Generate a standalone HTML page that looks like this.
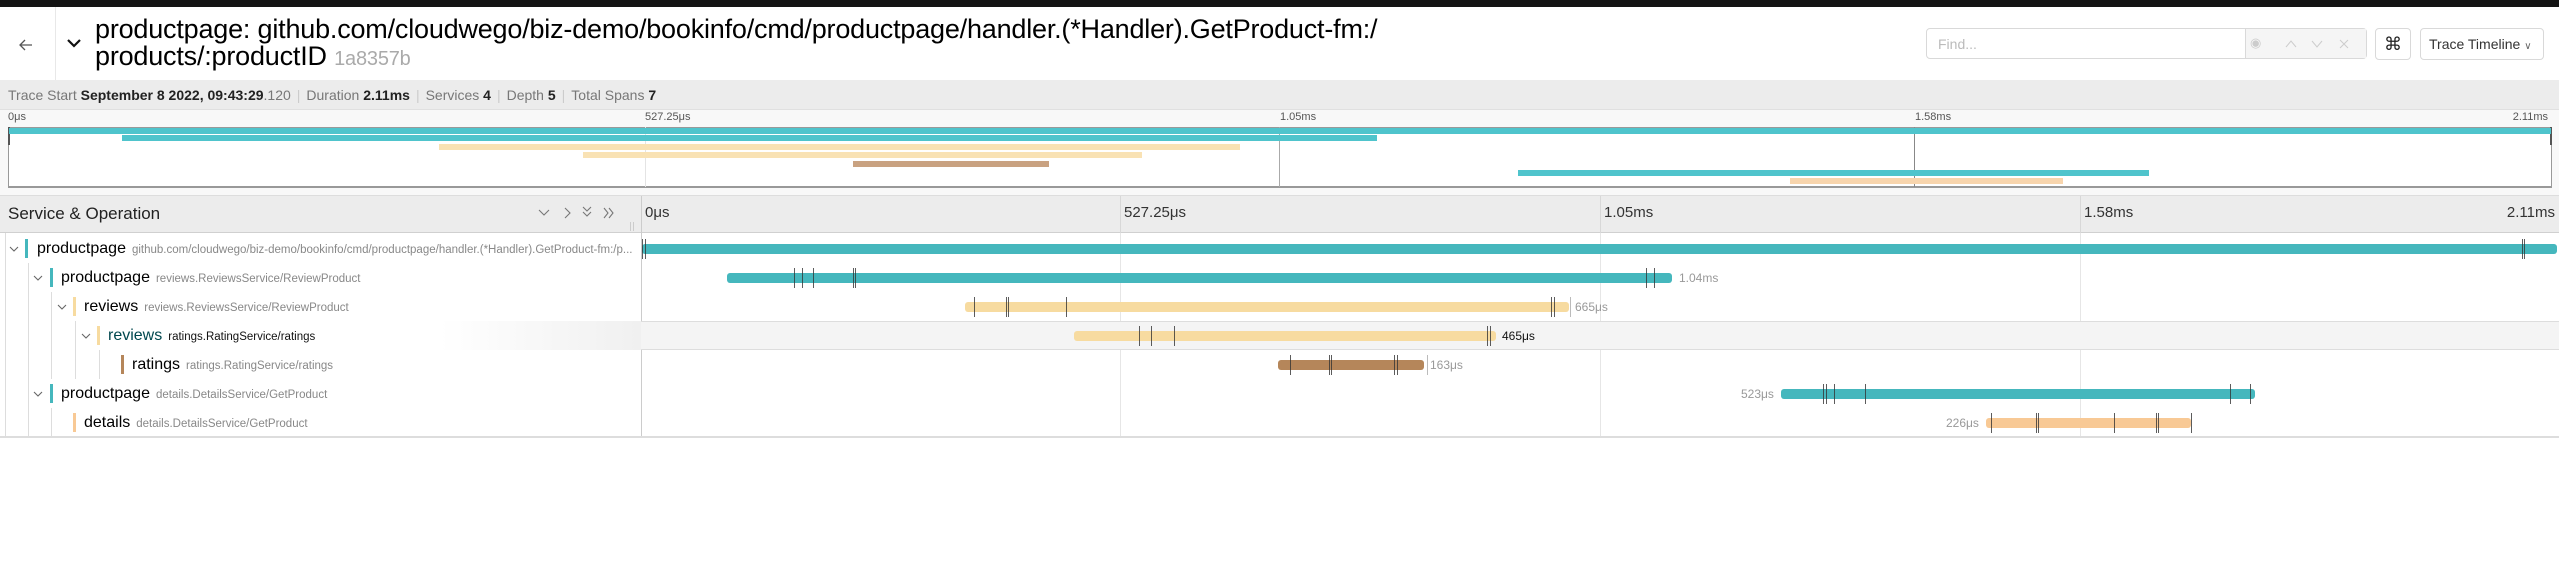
<!DOCTYPE html>
<html><head><meta charset="utf-8"><style>
*{box-sizing:border-box;margin:0;padding:0}
body{width:2559px;height:583px;background:#fff;font-family:"Liberation Sans",Arial,sans-serif;color:#000;position:relative;overflow:hidden}
.a{position:absolute}
.bar{position:absolute;height:10px;border-radius:3px}
.tk{position:absolute;width:1px;height:20px;background:#333;opacity:.8}
.lbl{position:absolute;font-size:12px;color:#999;white-space:nowrap}
.row{position:absolute;left:0;width:2559px;height:29px}
.svc{position:absolute;font-size:16px;white-space:nowrap;top:6px}
.svc small{font-size:11.5px;color:#888;margin-left:6px}
.cb{position:absolute;width:3px;height:19px;top:5px}
.tg{position:absolute;top:7px}
.gl{position:absolute;width:1px;background:#ddd}
.mb{position:absolute;height:6px}
</style></head><body>
<div class="a" style="left:0;top:0;width:2559px;height:7px;background:#141414"></div>
<!-- header -->
<div class="a" style="left:0;top:7px;width:56px;height:73px;border-right:1px solid #e8e8e8"></div>
<svg class="a" style="left:18px;top:37px" width="16" height="16" viewBox="0 0 16 16"><path d="M14 8H2M7 3L2 8l5 5" fill="none" stroke="#555" stroke-width="1.3"/></svg>
<svg class="a" style="left:67px;top:38px" width="14" height="10" viewBox="0 0 14 10"><path d="M1 2l6 6 6-6" fill="none" stroke="#111" stroke-width="2.2"/></svg>
<div class="a" style="left:95px;top:16px;font-size:27px;line-height:27px;font-weight:500;white-space:nowrap;letter-spacing:-0.2px">productpage: github.com/cloudwego/biz-demo/bookinfo/cmd/productpage/handler.(*Handler).GetProduct-fm:/<br>products/:productID <span style="color:#aaa;font-size:20px;font-weight:400">1a8357b</span></div>
<div class="a" style="left:1926px;top:28px;width:441px;height:31px;border:1px solid #d9d9d9;border-radius:4px"></div>
<div class="a" style="left:2245px;top:29px;width:121px;height:29px;background:#f5f5f5;border-left:1px solid #d9d9d9"></div>
<div class="a" style="left:1938px;top:36px;font-size:14px;color:#bbb">Find...</div>
<div class="a" style="left:2250px;top:35px;font-size:13px;color:#ccc;letter-spacing:0">◉</div>
<svg class="a" style="left:2284px;top:38px" width="80" height="12"><path d="M2 9l5-6 5 6M28 3l5 6 5-6M56 2l8 8M64 2l-8 8" fill="none" stroke="#ccc" stroke-width="1"/></svg>
<div class="a" style="left:2375px;top:28px;width:36px;height:32px;border:1px solid #d9d9d9;border-radius:4px;text-align:center;font-size:18px;line-height:30px;color:#222">⌘</div>
<div class="a" style="left:2420px;top:28px;width:124px;height:32px;border:1px solid #d9d9d9;border-radius:4px;font-size:14px;line-height:30px;padding-left:8px;color:#333">Trace Timeline <span style="font-size:10px;color:#666">∨</span></div>
<!-- info bar -->
<div class="a" style="left:0;top:80px;width:2559px;height:30px;background:#ececec;border-bottom:1px solid #e0e0e0"></div>
<div class="a" style="left:8px;top:87px;font-size:14px;color:#777;white-space:nowrap">Trace Start <b style="color:#222">September 8 2022, 09:43:29</b>.120<span style="color:#ccc;margin:0 6px">|</span>Duration <b style="color:#222">2.11ms</b><span style="color:#ccc;margin:0 6px">|</span>Services <b style="color:#222">4</b><span style="color:#ccc;margin:0 6px">|</span>Depth <b style="color:#222">5</b><span style="color:#ccc;margin:0 6px">|</span>Total Spans <b style="color:#222">7</b></div>
<!-- minimap -->
<div class="a" style="left:0;top:110px;width:2559px;height:86px;background:#f8f8f8"></div>
<div class="a" style="left:8px;top:111px;font-size:11px;color:#555">0μs</div>
<div class="a" style="left:645px;top:111px;font-size:11px;color:#555">527.25μs</div>
<div class="a" style="left:1280px;top:111px;font-size:11px;color:#555">1.05ms</div>
<div class="a" style="left:1915px;top:111px;font-size:11px;color:#555">1.58ms</div>
<div class="a" style="right:11px;top:111px;font-size:11px;color:#555">2.11ms</div>
<div class="a" style="left:8px;top:127px;width:2544px;height:61px;background:#fff;border:1px solid #999;border-width:1px 1px 2px 1px"></div>
<div class="a" style="left:8px;top:127px;width:2px;height:18px;background:#555"></div>
<div class="a" style="left:2550px;top:127px;width:2px;height:18px;background:#555"></div>
<div class="a" style="left:645px;top:127px;width:1px;height:60px;background:#e4e4e4"></div>
<div class="a" style="left:1279px;top:127px;width:1px;height:60px;background:#aaa"></div>
<div class="a" style="left:1914px;top:127px;width:1px;height:60px;background:#888"></div>
<div class="mb" style="left:9px;top:128px;width:2542px;background:#4fc4cc"></div>
<div class="mb" style="left:122px;top:135px;width:1255px;background:#4fc4cc"></div>
<div class="mb" style="left:439px;top:144px;width:801px;background:#f9e2b4"></div>
<div class="mb" style="left:583px;top:152px;width:559px;background:#f9e2b4"></div>
<div class="mb" style="left:853px;top:161px;width:196px;background:#c9a281"></div>
<div class="mb" style="left:1518px;top:170px;width:631px;background:#4fc4cc"></div>
<div class="mb" style="left:1790px;top:178px;width:273px;background:#f8d5ad"></div>
<!-- table header -->
<div class="a" style="left:0;top:195px;width:2559px;height:38px;background:#ececec;border-top:1px solid #ddd;border-bottom:1px solid #d0d0d0"></div>
<div class="a" style="left:8px;top:204px;font-size:17px;color:#222">Service &amp; Operation</div>
<svg class="a" style="left:538px;top:206px" width="90" height="14"><g fill="none" stroke="#777" stroke-width="1.1"><path d="M1 4l5 5 5-5"/><path d="M27 2l5 5-5 5"/><path d="M45 1l4 4 4-4M45 6l4 4 4-4"/><path d="M66 2l4 5-4 5M71 2l4 5-4 5"/></g></svg>
<div class="a" style="left:630px;top:222px;width:4px;height:9px;border-left:1px solid #ccc;border-right:1px solid #ccc"></div>
<div class="a" style="left:641px;top:196px;width:1px;height:241px;background:#ccc"></div>
<div class="a" style="left:645px;top:204px;font-size:15px;color:#333">0μs</div>
<div class="a" style="left:1124px;top:204px;font-size:15px;color:#333">527.25μs</div>
<div class="a" style="left:1604px;top:204px;font-size:15px;color:#333">1.05ms</div>
<div class="a" style="left:2084px;top:204px;font-size:15px;color:#333">1.58ms</div>
<div class="a" style="right:4px;top:204px;font-size:15px;color:#333">2.11ms</div>
<div class="a" style="left:1120px;top:196px;width:1px;height:37px;background:#d8d8d8"></div>
<div class="a" style="left:1600px;top:196px;width:1px;height:37px;background:#d8d8d8"></div>
<div class="a" style="left:2080px;top:196px;width:1px;height:37px;background:#d8d8d8"></div>
<!-- grid lines in body -->
<div class="a" style="left:1120px;top:233px;width:1px;height:204px;background:#e6e6e6"></div>
<div class="a" style="left:1600px;top:233px;width:1px;height:204px;background:#e6e6e6"></div>
<div class="a" style="left:2080px;top:233px;width:1px;height:204px;background:#e6e6e6"></div>
<!-- highlighted row 4 -->
<div class="a" style="left:641px;top:321px;width:1918px;height:29px;background:#f4f4f4;border-top:1px solid #ddd;border-bottom:1px solid #ddd"></div>
<div class="a" style="left:0;top:321px;width:641px;height:29px;background:linear-gradient(to right,#fff 0,#fff 440px,#f0f0f0 641px)"></div>
<!-- guide lines -->
<div class="gl" style="left:5px;top:233px;height:204px"></div>
<div class="gl" style="left:28px;top:263px;height:174px"></div>
<div class="gl" style="left:51px;top:292px;height:87px"></div>
<div class="gl" style="left:51px;top:408px;height:29px"></div>
<div class="gl" style="left:75px;top:321px;height:58px"></div>
<div class="gl" style="left:99px;top:350px;height:29px"></div>
<!-- rows left -->
<svg width="0" height="0" style="position:absolute"><defs><path id="chev" d="M1 2l4 4 4-4" fill="none" stroke="#666" stroke-width="1.1"/></defs></svg>
<div class="row" style="top:234px"><svg class="tg" style="left:9px;top:11px" width="10" height="8"><use href="#chev"/></svg><div class="cb" style="left:25px;background:#45b7bd"></div><div class="svc" style="left:37px">productpage<small>github.com/cloudwego/biz-demo/bookinfo/cmd/productpage/handler.(*Handler).GetProduct-fm:/p...</small></div></div>
<div class="row" style="top:263px"><svg class="tg" style="left:33px;top:11px" width="10" height="8"><use href="#chev"/></svg><div class="cb" style="left:50px;background:#45b7bd"></div><div class="svc" style="left:61px">productpage<small>reviews.ReviewsService/ReviewProduct</small></div></div>
<div class="row" style="top:292px"><svg class="tg" style="left:57px;top:11px" width="10" height="8"><use href="#chev"/></svg><div class="cb" style="left:73px;background:#f7dba0"></div><div class="svc" style="left:84px">reviews<small>reviews.ReviewsService/ReviewProduct</small></div></div>
<div class="row" style="top:321px"><svg class="tg" style="left:81px;top:11px" width="10" height="8"><use href="#chev"/></svg><div class="cb" style="left:97px;background:#f7dba0"></div><div class="svc" style="left:108px;color:#00474e">reviews<small style="color:#111">ratings.RatingService/ratings</small></div></div>
<div class="row" style="top:350px"><div class="cb" style="left:121px;background:#b5865a"></div><div class="svc" style="left:132px">ratings<small>ratings.RatingService/ratings</small></div></div>
<div class="row" style="top:379px"><svg class="tg" style="left:33px;top:11px" width="10" height="8"><use href="#chev"/></svg><div class="cb" style="left:50px;background:#45b7bd"></div><div class="svc" style="left:61px">productpage<small>details.DetailsService/GetProduct</small></div></div>
<div class="row" style="top:408px"><div class="cb" style="left:73px;background:#f8c995"></div><div class="svc" style="left:84px">details<small>details.DetailsService/GetProduct</small></div></div>
<!-- bars -->
<div class="bar" style="left:642px;top:244px;width:1915px;background:#45b7bd"></div>
<div class="tk" style="left:642px;top:239px"></div><div class="tk" style="left:645px;top:239px"></div><div class="tk" style="left:2522px;top:239px"></div><div class="tk" style="left:2524px;top:239px"></div>

<div class="bar" style="left:727px;top:273px;width:945px;background:#45b7bd"></div>
<div class="tk" style="left:794px;top:268px"></div><div class="tk" style="left:802px;top:268px"></div><div class="tk" style="left:813px;top:268px"></div><div class="tk" style="left:853px;top:268px"></div><div class="tk" style="left:855px;top:268px"></div><div class="tk" style="left:1646px;top:268px"></div><div class="tk" style="left:1654px;top:268px"></div>
<div class="lbl" style="left:1679px;top:271px">1.04ms</div>

<div class="bar" style="left:965px;top:302px;width:604px;background:#f7dba0"></div>
<div class="tk" style="left:974px;top:297px"></div><div class="tk" style="left:1006px;top:297px"></div><div class="tk" style="left:1008px;top:297px"></div><div class="tk" style="left:1066px;top:297px"></div><div class="tk" style="left:1551px;top:297px"></div><div class="tk" style="left:1554px;top:297px"></div><div class="tk" style="left:1570px;top:297px;background:#aaa"></div>
<div class="lbl" style="left:1575px;top:300px">665μs</div>

<div class="bar" style="left:1074px;top:331px;width:422px;background:#f7dba0"></div>
<div class="tk" style="left:1139px;top:326px"></div><div class="tk" style="left:1151px;top:326px"></div><div class="tk" style="left:1174px;top:326px"></div><div class="tk" style="left:1487px;top:326px"></div><div class="tk" style="left:1490px;top:326px"></div>
<div class="lbl" style="left:1502px;top:329px;color:#111">465μs</div>

<div class="bar" style="left:1278px;top:360px;width:146px;background:#b5865a"></div>
<div class="tk" style="left:1290px;top:355px"></div><div class="tk" style="left:1329px;top:355px"></div><div class="tk" style="left:1331px;top:355px"></div><div class="tk" style="left:1394px;top:355px"></div><div class="tk" style="left:1397px;top:355px"></div><div class="tk" style="left:1427px;top:355px;background:#aaa"></div>
<div class="lbl" style="left:1430px;top:358px">163μs</div>

<div class="bar" style="left:1781px;top:389px;width:474px;background:#45b7bd"></div>
<div class="tk" style="left:1823px;top:384px"></div><div class="tk" style="left:1826px;top:384px"></div><div class="tk" style="left:1834px;top:384px"></div><div class="tk" style="left:1865px;top:384px"></div><div class="tk" style="left:2230px;top:384px"></div><div class="tk" style="left:2250px;top:384px"></div>
<div class="lbl" style="left:1741px;top:387px">523μs</div>

<div class="bar" style="left:1986px;top:418px;width:205px;background:#f8c995"></div>
<div class="tk" style="left:1991px;top:413px"></div><div class="tk" style="left:2036px;top:413px"></div><div class="tk" style="left:2038px;top:413px"></div><div class="tk" style="left:2114px;top:413px"></div><div class="tk" style="left:2156px;top:413px"></div><div class="tk" style="left:2158px;top:413px"></div><div class="tk" style="left:2191px;top:413px"></div>
<div class="lbl" style="left:1946px;top:416px">226μs</div>

<div class="a" style="left:0;top:436px;width:2559px;height:2px;background:#ddd"></div>
</body></html>
